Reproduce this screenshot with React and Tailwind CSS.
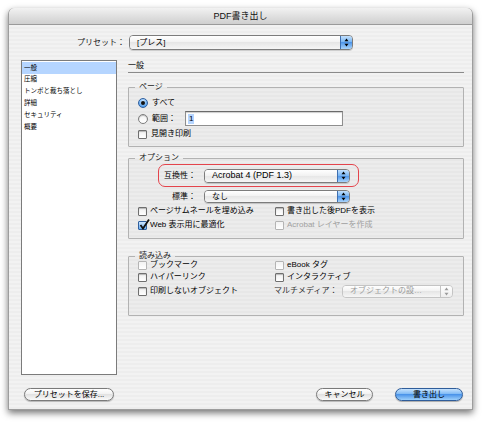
import React from "react";

const JP = "font-['Liberation_Sans','Noto_Sans_CJK_JP',sans-serif]";

function Arrows({ disabled }) {
  const c = disabled ? "#9a9a9a" : "#000";
  return (
    <svg width="5" height="9" viewBox="0 0 5 9">
      <path d="M2.5 0.5 L4.5 3.2 L0.5 3.2 Z" fill={c} />
      <path d="M2.5 8.5 L4.5 5.8 L0.5 5.8 Z" fill={c} />
    </svg>
  );
}

function Select({ w, h = 14, text, disabled, textClass = "" }) {
  return (
    <div
      className={`flex shrink-0 rounded-[4px] border overflow-hidden ${
        disabled ? "border-[#c4c4c4]" : "border-[#7c7c7c] shadow-[0_1px_0_rgba(0,0,0,0.15)]"
      }`}
      style={{ width: w, height: h }}
    >
      <div
        className={`flex-1 flex items-center pl-[7px] text-[8px] leading-none bg-[linear-gradient(#ffffff,#f1f1f1_50%,#e6e6e6_50%,#f6f6f6)] ${
          disabled ? "text-[#9a9a9a]" : "text-black"
        } ${textClass}`}
      >
        {text}
      </div>
      <div
        className={`w-[12px] flex items-center justify-center border-l ${
          disabled
            ? "border-[#c4c4c4] bg-[linear-gradient(#ffffff,#eeeeee)]"
            : "border-[#3e6fb0] bg-[linear-gradient(#c3e0fc,#72b2f3_50%,#4f96ea_50%,#a9d4fb)]"
        }`}
      >
        <Arrows disabled={disabled} />
      </div>
    </div>
  );
}

function Radio({ on }) {
  return (
    <div
      className={`w-[10px] h-[10px] rounded-full border shrink-0 flex items-center justify-center ${
        on
          ? "border-[#2f5f9e] bg-[radial-gradient(circle_at_50%_30%,#d4eaff,#5ea6ef_70%,#3a7fd6)]"
          : "border-[#7d7d7d] bg-[linear-gradient(#f4f4f4,#ffffff)] shadow-[inset_0_1px_1px_rgba(0,0,0,0.25)]"
      }`}
    >
      {on && <div className="w-[4px] h-[4px] rounded-full bg-[#111]" />}
    </div>
  );
}

function Check({ on, faint }) {
  return (
    <div
      className={`relative w-[9px] h-[9px] shrink-0 rounded-[1px] border ${
        on
          ? "border-[#2f5f9e] bg-[linear-gradient(#cde6ff,#6aaef2)]"
          : faint
          ? "border-[#b4b4b4] bg-[linear-gradient(#f2f2f2,#ffffff)]"
          : "border-[#6f6f6f] bg-[linear-gradient(#f0f0f0,#ffffff)] shadow-[inset_0_1px_1px_rgba(0,0,0,0.25)]"
      }`}
    >
      {on && (
        <svg className="absolute left-[0px] top-[-3px]" width="11" height="11" viewBox="0 0 11 11">
          <path d="M1.5 6 L4 9.5 L10 0.5" stroke="#111" strokeWidth="1.8" fill="none" />
        </svg>
      )}
    </div>
  );
}

function CheckRow({ on, faint, label, grey, w }) {
  return (
    <div className="flex items-center h-[12px] shrink-0" style={w ? { width: w } : undefined}>
      <Check on={on} faint={faint} />
      <span className={`ml-[3px] text-[8px] leading-none whitespace-nowrap ${grey ? "text-[#a0a0a0]" : "text-black"}`}>
        {label}
      </span>
    </div>
  );
}

function Group({ title, children, className = "" }) {
  return (
    <fieldset className={`border border-[#b2b2b2] bg-black/[0.025] rounded-[1px] ${className}`}>
      <legend className="ml-[6px] px-[4px] text-[8px] leading-[8px] text-[#222]">{title}</legend>
      {children}
    </fieldset>
  );
}

function Button({ children, w, primary }) {
  return (
    <div
      className={`h-[13px] rounded-full border flex items-center justify-center text-[8px] leading-none shrink-0 ${
        primary
          ? "border-[#2f5d9a] bg-[linear-gradient(#c6e2fd,#78b6f4_50%,#4b94ea_50%,#9dd0fb)] text-black shadow-[0_1px_1px_rgba(0,0,0,0.3)]"
          : "border-[#7a7a7a] bg-[linear-gradient(#ffffff,#f0f0f0_50%,#e2e2e2_50%,#fafafa)] text-black shadow-[0_1px_1px_rgba(0,0,0,0.25)]"
      }`}
      style={{ width: w }}
    >
      {children}
    </div>
  );
}

export default function App() {
  const listItems = ["一般", "圧縮", "トンボと裁ち落とし", "詳細", "セキュリティ", "概要"];
  return (
    <div className={`w-[486px] h-[423px] bg-white overflow-hidden pt-[8px] pl-[8px] ${JP}`}>
      <div className="w-[465px] h-[402px] rounded-t-[6px] border-x border-b border-[#9d9d9d] shadow-[0_3px_7px_rgba(0,0,0,0.55)] bg-[repeating-linear-gradient(0deg,#ededed_0px,#ededed_2px,#f2f2f2_2px,#f2f2f2_4px)] flex flex-col overflow-hidden">
        {/* title bar */}
        <div className="h-[17px] shrink-0 rounded-t-[6px] border-b border-[#9a9a9a] bg-[linear-gradient(#f2f2f2,#e2e2e2_45%,#cfcfcf)] flex items-center justify-center text-[9px] leading-none text-[#111]">
          PDF書き出し
        </div>

        {/* preset row */}
        <div className="flex items-center mt-[10px] h-[15px]">
          <div className="ml-[65px] w-[51px] text-right text-[8px] leading-none text-[#222]">プリセット：</div>
          <div className="ml-[4px]">
            <Select w={224} h={15} text="[プレス]" textClass="text-[#4a2020]" />
          </div>
        </div>

        {/* main */}
        <div className="flex mt-[10px]">
          <div className="ml-[12px] w-[96px] h-[315px] bg-white border border-[#7b7b7b] pt-[1px] shrink-0">
            {listItems.map((t, i) => (
              <div
                key={t}
                className={`h-[11.8px] flex items-center pl-[2px] text-[6.5px] leading-none whitespace-nowrap text-black ${
                  i === 0 ? "bg-[#b5d5ff]" : ""
                }`}
              >
                {t}
              </div>
            ))}
          </div>

          <div className="ml-[11px] w-[336px] flex flex-col">
            <div className="h-[13px] border-b border-[#8a8a8a] flex items-center text-[8px] leading-none text-black">
              一般
            </div>

            {/* ページ */}
            <Group title="ページ" className="mt-[10px] pb-[6px]">
              <div className="pl-[9px] pt-[6px] flex flex-col">
                <div className="flex items-center h-[12px]">
                  <Radio on />
                  <span className="ml-[4px] text-[8px] leading-none">すべて</span>
                </div>
                <div className="flex items-center h-[15px] mt-[2px]">
                  <Radio />
                  <span className="ml-[4px] w-[33px] text-[8px] leading-none">範囲：</span>
                  <div className="w-[158px] h-[15px] bg-white border border-[#8e8e8e] border-t-[#6a6a6a] shadow-[inset_0_1px_1px_rgba(0,0,0,0.2)] flex items-center pl-[2px]">
                    <span className="bg-[#b5d5ff] text-[8px] leading-[10px] px-[1px]">1</span>
                  </div>
                </div>
                <div className="flex items-center h-[12px] mt-[2px]">
                  <Check />
                  <span className="ml-[4px] text-[8px] leading-none">見開き印刷</span>
                </div>
              </div>
            </Group>

            {/* オプション */}
            <Group title="オプション" className="mt-[7px] pb-[7px]">
              <div className="pt-[2px] flex flex-col">
                <div className="ml-[29px] w-[201px] h-[23px] border-[1.5px] border-[#e4444c] rounded-[7px] flex items-center">
                  <div className="w-[37px] text-right text-[8px] leading-none">互換性：</div>
                  <div className="ml-[8px]">
                    <Select w={146} text="Acrobat 4 (PDF 1.3)" textClass="text-[9px]" />
                  </div>
                </div>
                <div className="ml-[29px] w-[201px] h-[13px] mt-[3px] flex items-center">
                  <div className="w-[38px] text-right text-[8px] leading-none">標準：</div>
                  <div className="ml-[8px]">
                    <Select w={146} h={13} text="なし" />
                  </div>
                </div>
                <div className="pl-[9px] mt-[2px] flex flex-col gap-[2px]">
                  <div className="flex">
                    <CheckRow w={137} label="ページサムネールを埋め込み" />
                    <CheckRow label="書き出した後PDFを表示" />
                  </div>
                  <div className="flex">
                    <CheckRow w={137} on label="Web 表示用に最適化" />
                    <CheckRow faint grey label="Acrobat レイヤーを作成" />
                  </div>
                </div>
              </div>
            </Group>

            {/* 読み込み */}
            <Group title="読み込み" className="mt-[13px] h-[64px]">
              <div className="pl-[9px] -mt-[1px] flex flex-col">
                <div className="flex">
                  <CheckRow w={137} faint label="ブックマーク" />
                  <CheckRow faint label="eBook タグ" />
                </div>
                <div className="flex">
                  <CheckRow w={137} label="ハイパーリンク" />
                  <CheckRow label="インタラクティブ" />
                </div>
                <div className="flex items-center mt-[1px] h-[14px]">
                  <div className="w-[136px]">
                    <CheckRow label="印刷しないオブジェクト" />
                  </div>
                  <div className="w-[68px] text-[8px] leading-none text-[#333] whitespace-nowrap">マルチメディア：</div>
                  <Select w={111} h={13} disabled text="オブジェクトの設…" />
                </div>
              </div>
            </Group>
          </div>
        </div>

        {/* footer */}
        <div className="flex items-center mt-[13px]">
          <div className="ml-[15px]">
            <Button w={90}>プリセットを保存...</Button>
          </div>
          <div className="ml-auto flex gap-[22px] mr-[9px]">
            <Button w={57}>キャンセル</Button>
            <Button w={68} primary>
              書き出し
            </Button>
          </div>
        </div>
      </div>
    </div>
  );
}
